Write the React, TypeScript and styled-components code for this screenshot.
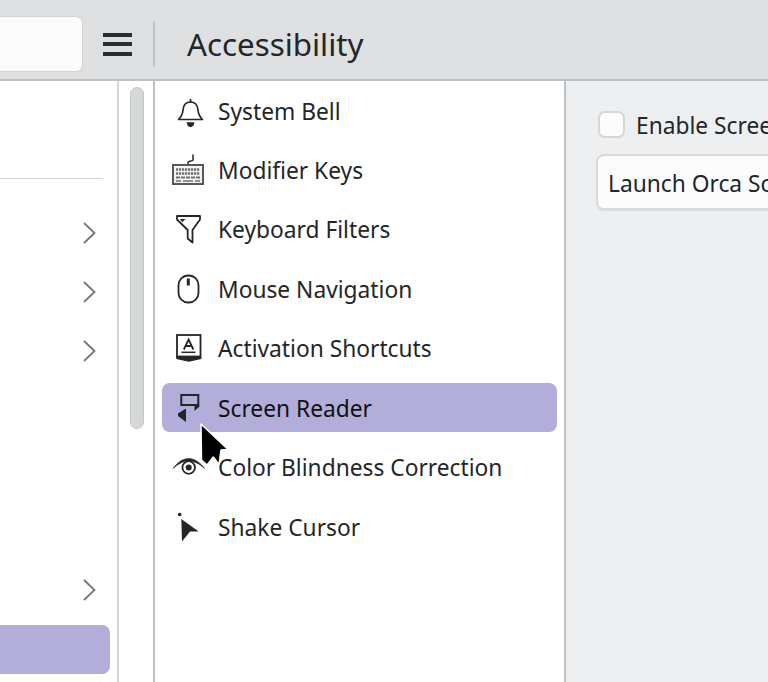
import React from "react";
import styled, { createGlobalStyle } from "styled-components";

const Global = createGlobalStyle`
  html, body { margin: 0; padding: 0; width: 768px; height: 682px; overflow: hidden; background: #fff; }
  * { box-sizing: border-box; }
`;

const Page = styled.div`
  position: relative;
  width: 768px;
  height: 682px;
  overflow: hidden;
  display: flex;
  flex-direction: column;
  font-family: "Noto Sans", sans-serif;
  color: #232629;
`;

const Header = styled.header`
  height: 81px;
  flex: none;
  display: flex;
  align-items: center;
  background: #dee0e2;
  border-bottom: 2px solid #bfc2c5;
  padding-top: 9px;
`;

const Search = styled.div`
  width: 83px;
  height: 56px;
  flex: none;
  background: #fcfcfc;
  border: 1px solid #d2d4d6;
  border-left: none;
  border-radius: 0 7px 7px 0;
`;

const MenuButton = styled.button`
  width: 29px;
  height: 23px;
  margin-left: 20px;
  padding: 0;
  border: none;
  background: none;
  flex: none;
  display: flex;
  flex-direction: column;
  justify-content: space-between;
`;

const MenuBar = styled.span`
  display: block;
  height: 4px;
  background: #2b2e31;
`;

const HeaderDivider = styled.div`
  width: 2px;
  height: 46px;
  margin-left: 21px;
  background: #bfc2c5;
  flex: none;
`;

const Title = styled.h1`
  margin: 0 0 0 32px;
  font-size: 31.3px;
  font-weight: 400;
  line-height: 40px;
  white-space: nowrap;
`;

const Body = styled.div`
  flex: 1;
  min-height: 0;
  display: flex;
`;

const Sidebar = styled.aside`
  width: 119px;
  flex: none;
  display: flex;
  flex-direction: column;
  padding-top: 97px;
  border-right: 2px solid #d2d4d6;
  background: #fff;
`;

const SideRule = styled.div`
  width: 103px;
  height: 1px;
  background: #d2d4d6;
  flex: none;
  margin-bottom: 24px;
`;

const SideRow = styled.div<{ $gap?: number }>`
  height: 59.4px;
  flex: none;
  width: 96px;
  margin-top: ${(p) => p.$gap ?? 0}px;
  display: flex;
  align-items: center;
  justify-content: flex-end;
  color: #73767a;
`;

const SideSelected = styled.div`
  width: 110px;
  height: 49px;
  flex: none;
  margin-top: 5px;
  background: #b2aed9;
  border-radius: 0 8px 8px 0;
`;

const ScrollTrack = styled.div`
  width: 36px;
  flex: none;
  padding: 6px 0 0 11px;
  background: #fff;
  border-right: 2px solid #bfc2c5;
`;

const ScrollThumb = styled.div`
  width: 13.5px;
  height: 342px;
  background: #d6d8d8;
  border: 1px solid #c3c6c7;
  border-radius: 7px;
`;

const List = styled.nav`
  width: 411px;
  flex: none;
  padding: 5px 8px 0 7px;
  background: #fff;
  display: flex;
  flex-direction: column;
  border-right: 2px solid #bfc2c5;
`;

const Item = styled.div<{ $active?: boolean }>`
  height: 49px;
  margin-bottom: 10.45px;
  flex: none;
  width: 395px;
  display: flex;
  align-items: center;
  padding-left: 9px;
  border-radius: 8px;
  background: ${(p) => (p.$active ? "#b2aed9" : "transparent")};
  color: ${(p) => (p.$active ? "#111" : "#232629")};
`;

const IconWrap = styled.svg`
  width: 36px;
  height: 32px;
  flex: none;
  color: #232629;
  overflow: visible;
`;

const ItemLabel = styled.span`
  margin-left: 11px;
  padding-top: 2px;
  font-size: 22.75px;
  line-height: 30px;
  white-space: nowrap;
`;

const Detail = styled.main`
  flex: 1;
  min-width: 0;
  background: #eeeff1;
  padding: 30px 0 0 30px;
  overflow: hidden;
`;

const CheckRow = styled.label`
  display: flex;
  align-items: center;
  height: 27px;
  margin-left: 2px;
  white-space: nowrap;
`;

const CheckBox = styled.span`
  width: 27px;
  height: 27px;
  flex: none;
  background: #fcfcfc;
  border: 2px solid #d4d6d8;
  border-radius: 7px;
`;

const CheckLabel = styled.span`
  margin-left: 11px;
  padding-top: 2px;
  font-size: 22.75px;
  line-height: 30px;
`;

const Combo = styled.button`
  display: block;
  margin-top: 16px;
  width: 400px;
  height: 57px;
  padding: 2px 0 0 10px;
  background: #fcfcfc;
  border: 2px solid #d8dadc;
  border-bottom-width: 3px;
  border-radius: 8px;
  color: #232629;
  font-family: "Noto Sans", sans-serif;
  font-size: 22.75px;
  text-align: left;
  white-space: nowrap;
`;

const PointerSvg = styled.svg`
  position: absolute;
  left: 196px;
  top: 420px;
  width: 38px;
  height: 50px;
`;

const Chevron = () => (
  <svg width="13" height="22" viewBox="0 0 13 22" fill="none" stroke="currentColor" strokeWidth="1.800">
    <path d="M1 1 11.500 11 1 21" />
  </svg>
);

const Bell = () => (
  <IconWrap viewBox="0 0 36 32" fill="none" stroke="currentColor" strokeWidth="1.700">
    <path d="M19.500 7c-5 0-7.100 3.500-7.500 8-.4 4-1.400 6.500-4.500 9.500h24c-3.100-3-4.100-5.500-4.500-9.500-.4-4.500-2.500-8-7.500-8Z" strokeLinejoin="round" />
    <path d="M19.500 4v3" />
    <path d="M15.700 27.300h7.600a3.800 5 0 0 1-7.600 0Z" fill="currentColor" stroke="none" />
  </IconWrap>
);

const Keyboard = () => (
  <IconWrap viewBox="0 0 36 32" fill="none" stroke="currentColor">
    <path d="M22 .5v5.500c0 1.300-5 .8-5 2.500v2.500" strokeWidth="1.500" />
    <rect x="2" y="11" width="30" height="19" fill="#f4f4f4" stroke="#55585b" strokeWidth="2" />
    <path d="M5 15.500h24M5 19.500h24" stroke="#6f7275" strokeWidth="2.300" strokeDasharray="2.200 .8" />
    <path d="M5 23.500h24" stroke="#6f7275" strokeWidth="2" strokeDasharray="4 1" />
    <path d="M5 27h5M12 27h10M24 27h5" stroke="#6f7275" strokeWidth="1.600" />
  </IconWrap>
);

const Funnel = () => (
  <IconWrap viewBox="0 0 36 32" fill="none" stroke="currentColor" strokeWidth="1.800">
    <path d="M6 3h23v3.500l-7.500 10.500v12.500l-4.800-4v-8.500L6 6.500Z" strokeLinejoin="round" />
    <path d="M9 6h5.500l-3.300 3.300Z" fill="currentColor" stroke="none" />
  </IconWrap>
);

const Mouse = () => (
  <IconWrap viewBox="0 0 36 32" fill="none" stroke="currentColor" strokeWidth="1.800">
    <rect x="7.500" y="2.500" width="20" height="27" rx="9.500" />
    <path d="M17.300 5.500v7" strokeWidth="3" />
  </IconWrap>
);

const Activation = () => (
  <IconWrap viewBox="0 0 36 32" fill="none" stroke="currentColor" strokeWidth="1.800">
    <rect x="6" y="3" width="23.500" height="21.500" />
    <path d="M5.300 24h25v3l-12.500 2.700L5.300 27Z" fill="currentColor" stroke="none" />
    <path d="M12.800 17.500l4.800-10 4.800 10M14.500 14h6.300" strokeWidth="1.800" />
    <path d="M10.500 20.300h14" strokeWidth="1.500" />
  </IconWrap>
);

const Reader = () => (
  <IconWrap viewBox="0 0 36 32" fill="none" stroke="currentColor" strokeWidth="2">
    <rect x="10.300" y="3" width="17" height="10" />
    <path d="M23.500 13.500h5v1l-5 4.500Z" fill="currentColor" stroke="none" />
    <path d="M15 16.500v13.500l-8-6v-2.500Z" fill="currentColor" stroke="none" />
  </IconWrap>
);

const Eye = () => (
  <IconWrap viewBox="0 0 36 32" fill="none" stroke="currentColor">
    <path d="M2 17.500c4.500-6 9.800-10 15.700-10s11.200 4 16 10c-5-4.300-10.300-7.600-16-7.600S7 13.200 2 17.500Z" fill="currentColor" strokeWidth=".6" />
    <circle cx="17.700" cy="16.500" r="6.300" strokeWidth="1.800" />
    <circle cx="17.700" cy="16.500" r="3" fill="currentColor" stroke="none" />
  </IconWrap>
);

const Shake = () => (
  <IconWrap viewBox="0 0 36 32" fill="currentColor">
    <circle cx="8.700" cy="3.500" r="1.800" />
    <path d="M10.300 8l17.400 12.500h-8.700l-8 10Z" />
  </IconWrap>
);

const items: { label: string; icon: React.ReactNode; active?: boolean }[] = [
  { label: "System Bell", icon: <Bell /> },
  { label: "Modifier Keys", icon: <Keyboard /> },
  { label: "Keyboard Filters", icon: <Funnel /> },
  { label: "Mouse Navigation", icon: <Mouse /> },
  { label: "Activation Shortcuts", icon: <Activation /> },
  { label: "Screen Reader", icon: <Reader />, active: true },
  { label: "Color Blindness Correction", icon: <Eye /> },
  { label: "Shake Cursor", icon: <Shake /> },
];

export default function App() {
  return (
    <Page>
      <Global />
      <Header>
        <Search />
        <MenuButton aria-label="Menu">
          <MenuBar />
          <MenuBar />
          <MenuBar />
        </MenuButton>
        <HeaderDivider />
        <Title>Accessibility</Title>
      </Header>
      <Body>
        <Sidebar>
          <SideRule />
          <SideRow><Chevron /></SideRow>
          <SideRow><Chevron /></SideRow>
          <SideRow><Chevron /></SideRow>
          <SideRow $gap={179}><Chevron /></SideRow>
          <SideSelected />
        </Sidebar>
        <ScrollTrack>
          <ScrollThumb />
        </ScrollTrack>
        <List>
          {items.map((it) => (
            <Item key={it.label} $active={it.active}>
              {it.icon}
              <ItemLabel>{it.label}</ItemLabel>
            </Item>
          ))}
        </List>
        <Detail>
          <CheckRow>
            <CheckBox />
            <CheckLabel>Enable Screen Reader</CheckLabel>
          </CheckRow>
          <Combo>Launch Orca Screen Reader Configuration...</Combo>
        </Detail>
      </Body>
      <PointerSvg viewBox="0 0 38 50">
        <path d="M5 4 5.500 40 11 45 17.300 37 23 44.500 25 30 32 29.500Z" fill="#000" stroke="#fff" strokeWidth="1.500" strokeLinejoin="round" />
      </PointerSvg>
    </Page>
  );
}
